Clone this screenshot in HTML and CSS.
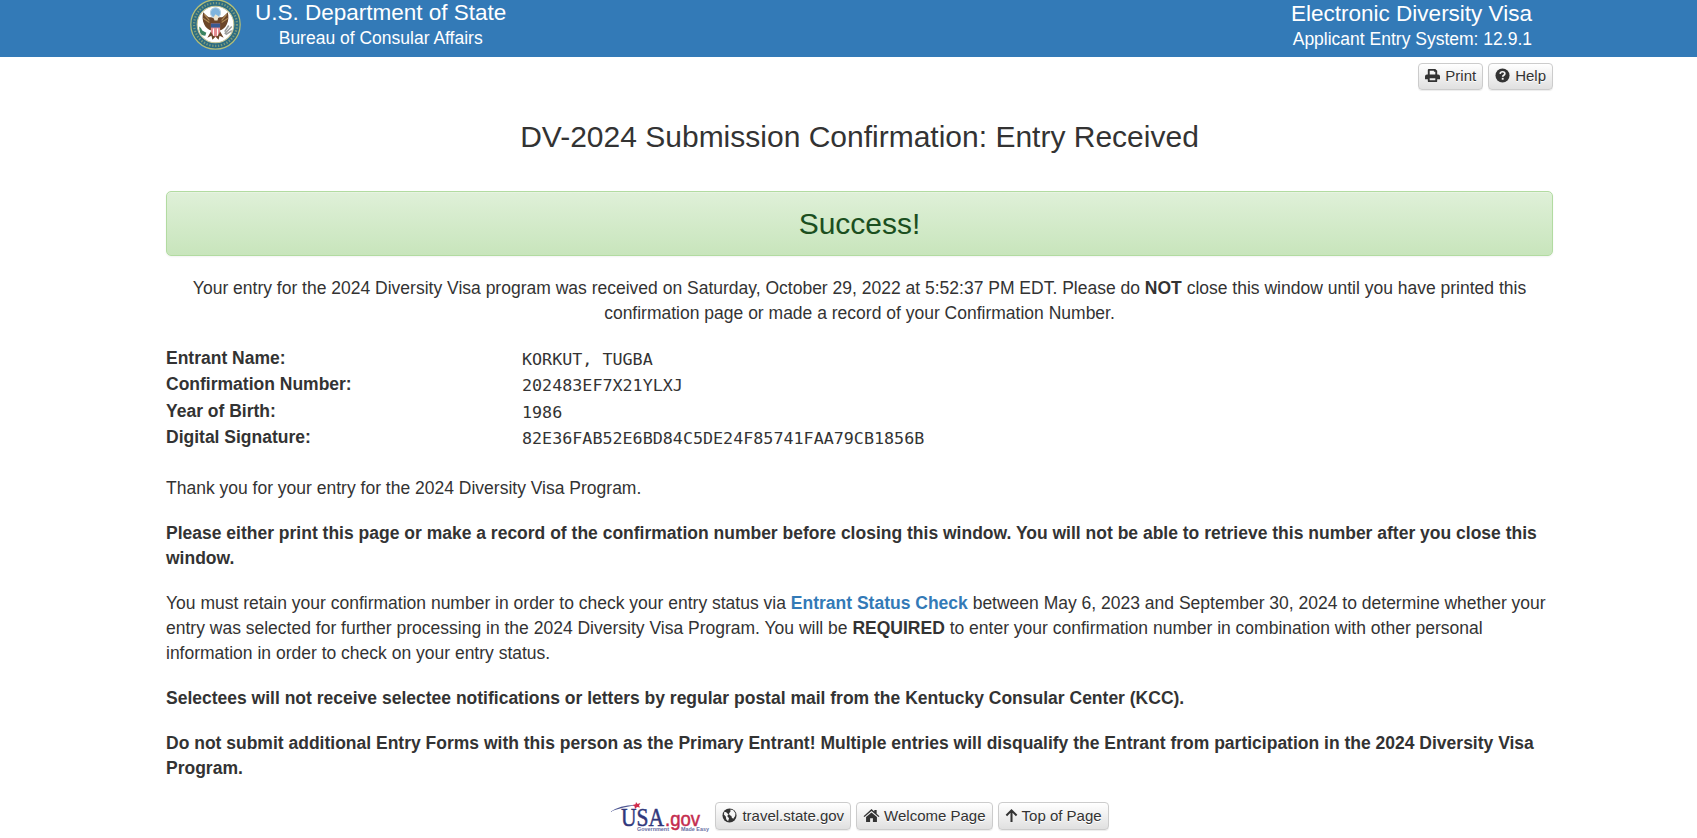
FILE: index.html
```html
<!DOCTYPE html>
<html lang="en">
<head>
<meta charset="utf-8">
<title>Electronic Diversity Visa</title>
<link rel="stylesheet" href="styles.css">
</head>
<body>
<header class="banner">
  <div class="banner-inner">
    <div class="brand">
      <svg class="seal" viewBox="0 0 50 50" aria-hidden="true">
        <circle cx="25" cy="25" r="24.2" fill="#2c6c82" stroke="#b5bf78" stroke-width="1.2"/>
        <circle cx="25" cy="25" r="21" fill="none" stroke="#7d9a7c" stroke-width="2.2" stroke-dasharray="1.3 1.6"/>
        <circle cx="25" cy="25" r="18" fill="#fff" stroke="#c8c796" stroke-width="1"/>
        <circle cx="25" cy="13.500" r="5" fill="#7fb4dc" stroke="#b5cfdf" stroke-width="1"/>
        <path d="M23 19c-2-2-4 0-6-2-2-2-3-3-4-4-1 4-1 8 1 12 1 3 4 5 7 6l-4 7 4-2 1 4 3-3 3 3 1-4 4 2-4-7c3-1 6-3 7-6 2-4 2-8 1-12-1 1-2 2-4 4-2 2-4 0-6 2l-1-2h-2z" fill="#6b4528"/>
        <path d="M14 15l5 6M13 19l6 4M36 15l-5 6M37 19l-6 4" stroke="#b38e58" stroke-width="1"/>
        <path d="M23 18l2-3 3 2-1 4h-3z" fill="#eee5cc"/>
        <path d="M20.500 24h9v6c0 4-2 6-4.500 7-2.500-1-4.500-3-4.500-7z" fill="#e58b91"/>
        <path d="M20.500 24h9v4h-9z" fill="#385a91"/>
        <path d="M23 29v7M27 29v7" stroke="#fff" stroke-width="1"/>
        <path d="M9 27q2 1 3 4l4 2-1 3q-4 0-5-3t-1-6z" fill="#3b8360"/>
        <path d="M34 34l7-7M35 35l6-4M34 32l4-6" stroke="#9b9d9b" stroke-width="1.500"/>
      </svg>
      <div class="brand-text">
        <div class="banner-title">U.S. Department of State</div>
        <div class="banner-sub">Bureau of Consular Affairs</div>
      </div>
    </div>
    <div class="system">
      <div class="banner-title">Electronic Diversity Visa</div>
      <div class="banner-sub">Applicant Entry System: 12.9.1</div>
    </div>
  </div>
</header>
<main class="page">
  <div class="tools">
    <a class="btn"><svg class="icon" viewBox="0 0 16 16"><path d="M4 1h7l2 2v4h-2V4H9.500V3H5v4H3V2q0-1 1-1zM2 7h12q2 0 2 2v3h-3v2q0 1-1 1H4q-1 0-1-1v-2H0V9q0-2 2-2zm3 4v2h6v-2z" fill="currentColor" fill-rule="evenodd"/></svg>Print</a>
    <a class="btn"><svg class="icon" viewBox="0 0 16 16"><circle cx="8" cy="8" r="7.500" fill="currentColor"/><path d="M5.500 6.200C5.700 4.500 6.700 4 8 4c1.500 0 2.500.8 2.500 2 0 1.700-2.300 1.700-2.300 3.300" fill="none" stroke="#f5f5f5" stroke-width="1.800"/><path d="M7.200 10.500h2v2h-2z" fill="#f5f5f5"/></svg>Help</a>
  </div>
  <h1 class="title">DV-2024 Submission Confirmation: Entry Received</h1>
  <div class="alert">Success!</div>
  <p class="intro">Your entry for the 2024 Diversity Visa program was received on Saturday, October 29, 2022 at 5:52:37 PM EDT. Please do <b>NOT</b> close this window until you have printed this<br>confirmation page or made a record of your Confirmation Number.</p>
  <dl class="details">
    <dt>Entrant Name:</dt><dd>KORKUT, TUGBA</dd>
    <dt>Confirmation Number:</dt><dd>202483EF7X21YLXJ</dd>
    <dt>Year of Birth:</dt><dd>1986</dd>
    <dt>Digital Signature:</dt><dd>82E36FAB52E6BD84C5DE24F85741FAA79CB1856B</dd>
  </dl>
  <p>Thank you for your entry for the 2024 Diversity Visa Program.</p>
  <p><b>Please either print this page or make a record of the confirmation number before closing this window. You will not be able to retrieve this number after you close this<br>window.</b></p>
  <p>You must retain your confirmation number in order to check your entry status via <a class="link">Entrant Status Check</a> between May 6, 2023 and September 30, 2024 to determine whether your<br>entry was selected for further processing in the 2024 Diversity Visa Program. You will be <b>REQUIRED</b> to enter your confirmation number in combination with other personal<br>information in order to check on your entry status.</p>
  <p><b>Selectees will not receive selectee notifications or letters by regular postal mail from the Kentucky Consular Center (KCC).</b></p>
  <p><b>Do not submit additional Entry Forms with this person as the Primary Entrant! Multiple entries will disqualify the Entrant from participation in the 2024 Diversity Visa<br>Program.</b></p>
  <footer class="links">
    <svg class="usagov" viewBox="0 0 100 30" role="img" aria-label="USA.gov">
      <path d="M0 10Q11 2 29 3Q13 4.500 0 10z" fill="#4b5491"/>
      <text x="11" y="23.500" class="usa" textLength="43" lengthAdjust="spacingAndGlyphs">USA</text>
      <text x="55" y="23.500" class="gov" textLength="35" lengthAdjust="spacingAndGlyphs">.gov</text>
      <path d="M26 0l1.500 2 3-1-1.500 2.500 1 2-3-.5-2 2-.5-2.700-2-1.300 3-.700z" fill="#d02b4a"/>
      <text x="27" y="28.500" class="tag" textLength="32" lengthAdjust="spacingAndGlyphs">Government</text>
      <text x="71" y="28.500" class="tag" textLength="28" lengthAdjust="spacingAndGlyphs">Made Easy</text>
    </svg>
    <a class="btn"><svg class="icon" viewBox="0 0 16 16"><circle cx="8" cy="8" r="7.500" fill="currentColor"/><path d="M9 1.500l3 1 2.300 3-.3 3-2 3-1.500-1-.5-2-2-1-.5-2 1.500-1.500zM2.500 4l2 .5L7 7 5.500 8.500 7.500 11l-1 3-2-2-.5-3-2-2z" fill="#f5f5f5"/></svg>travel.state.gov</a>
    <a class="btn"><svg class="icon icon-home" viewBox="0 0 17 16"><path d="M8.500 1l3 2.700V2H14v4l3 2.700-1 1L8.500 3.200 1 9.700l-1-1z" fill="currentColor"/><path d="M8.500 4.700l5.800 5V15H10v-4H7v4H2.700V9.700z" fill="currentColor"/></svg>Welcome Page</a>
    <a class="btn"><svg class="icon icon-up" viewBox="0 0 14 16"><path d="M7 15V3M1.500 8L7 2.500 12.500 8" fill="none" stroke="currentColor" stroke-width="2.200"/></svg>Top of Page</a>
  </footer>
</main>
</body>
</html>
```
FILE: styles.css
```css
* { box-sizing: border-box; }
body {
  margin: 0;
  height: 838px;
  overflow: hidden;
  background: #fff;
  color: #333;
  font: 17.5px/25px "Liberation Sans", Arial, sans-serif;
}
.banner { height: 57px; background: #337ab7; color: #fff; }
.banner-inner,
.page {
  width: 1387px;
  margin-left: 166px;
}
.banner-inner {
  padding: 0 21px 0 24px;
  display: flex;
  justify-content: space-between;
}
.brand { display: flex; gap: 14px; }
.seal { width: 51px; height: 51px; margin-top: -1px; }
.banner-title { font-size: 22.5px; line-height: 26px; }
.banner-sub { font-size: 17.5px; line-height: 25px; }
.brand-text { text-align: center; }
.system { text-align: right; padding-top: 1px; }
.tools { display: flex; justify-content: flex-end; gap: 5px; padding-top: 6px; }
.btn {
  display: inline-flex;
  align-items: center;
  height: 28px;
  padding: 0 6px 2px;
  border: 1px solid #ccc;
  border-radius: 4px;
  background: linear-gradient(#fff, #e0e0e0);
  box-shadow: inset 0 1px 0 rgba(255,255,255,.15), 0 1px 1px rgba(0,0,0,.075);
  font-size: 15px;
  line-height: 22px;
  text-shadow: 0 1px 0 #fff;
  white-space: nowrap;
}
.tools .btn { height: 27px; margin-bottom: 1px; }
.links .btn { padding-bottom: 0; }
.icon { width: 15px; height: 15px; margin-right: 5px; flex: none; }
.icon-home { width: 17px; margin-right: 4px; }
.icon-up { width: 13px; margin-right: 4px; }
.title {
  margin: 29px 0 37px;
  font-size: 30px;
  line-height: 34px;
  font-weight: 400;
  text-align: center;
}
.alert {
  height: 65px;
  border: 1px solid #b2dba1;
  border-radius: 5px;
  background: linear-gradient(#dff0d8, #c8e5bc);
  box-shadow: inset 0 1px 0 rgba(255,255,255,.25), 0 1px 2px rgba(0,0,0,.05);
  color: #1b4f20;
  font-size: 30px;
  line-height: 63px;
  text-align: center;
}
p { margin: 0 0 20px; white-space: nowrap; }
.intro { margin-top: 20px; text-align: center; }
.details {
  display: grid;
  grid-template-columns: 356px 1fr;
  grid-auto-rows: 26.400px;
  margin: 0 0 24px;
}
dt { font-weight: 700; }
dd {
  margin: 0;
  padding-top: 1px;
  font-family: "DejaVu Sans Mono", Consolas, monospace;
  font-size: 16.720px;
}
.link { color: #337ab7; font-weight: 700; }
.links { display: flex; justify-content: center; gap: 5px; padding-top: 1px; }
.usagov { width: 100px; height: 30px; }
.usa { font: 26px "Liberation Serif", serif; fill: #30387c; stroke: #30387c; stroke-width: .5px; }
.gov { font: 20px "Liberation Sans", sans-serif; fill: #c42c4e; stroke: #c42c4e; stroke-width: .5px; }
.tag { font: 700 5px "Liberation Sans", sans-serif; fill: #6a70a5; }
```
